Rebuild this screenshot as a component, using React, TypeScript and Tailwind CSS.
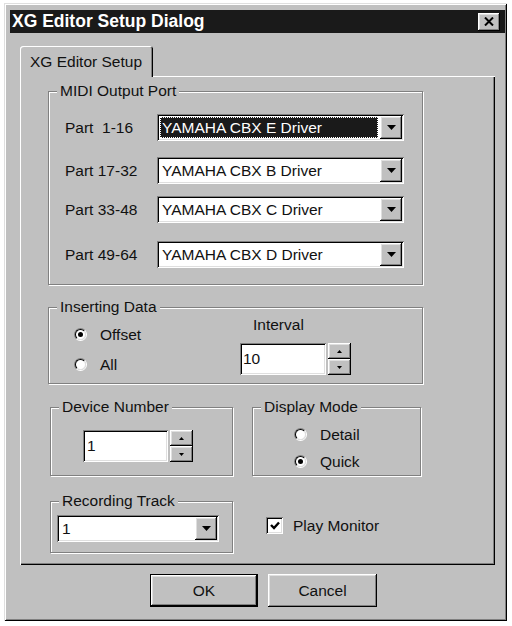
import React from 'react';

// win95-ish bevels
const raised =
  'shadow-[inset_-1px_-1px_0_#000,inset_1px_1px_0_#fff,inset_-2px_-2px_0_#808080,inset_2px_2px_0_#dfdfdf]';
const sunken =
  'shadow-[inset_1px_1px_0_#808080,inset_-1px_-1px_0_#fff,inset_2px_2px_0_#000,inset_-2px_-2px_0_#dfdfdf]';

function Group({ label, className, children }: { label: string; className: string; children?: React.ReactNode }) {
  return (
    <fieldset
      className={`border border-[#808080] shadow-[1px_1px_0_#fff,inset_1px_1px_0_#fff] ${className}`}
    >
      <legend className="ml-[8px] bg-[#c0c0c0] px-[3px] leading-[18px]">{label}</legend>
      {children}
    </fieldset>
  );
}

function Combo({ value, selected, className }: { value: string; selected?: boolean; className: string }) {
  return (
    <div className={`flex h-[27px] bg-white p-[2px] ${sunken} ${className}`}>
      <div className="flex flex-1 items-center py-[1px] pl-[1px] pr-[2px]">
        {selected ? (
          <span className="flex h-full w-full items-center border border-dotted border-white bg-[#1a1a1a] pl-[1px] text-white">
            {value}
          </span>
        ) : (
          <span className="pl-[2px]">{value}</span>
        )}
      </div>
      <div className={`flex h-full w-[22px] items-center justify-center bg-[#c0c0c0] ${raised}`}>
        <svg width="9" height="5" viewBox="0 0 9 5">
          <path d="M0 0h9L4.5 5z" fill="#000" />
        </svg>
      </div>
    </div>
  );
}

function Spin() {
  return (
    <div className="ml-[2px] flex h-[32px] w-[23px] flex-col">
      <div className={`flex flex-1 items-center justify-center bg-[#c0c0c0] ${raised}`}>
        <svg width="5" height="3" viewBox="0 0 5 3">
          <path d="M2.5 0L5 3H0z" fill="#000" />
        </svg>
      </div>
      <div className={`flex flex-1 items-center justify-center bg-[#c0c0c0] ${raised}`}>
        <svg width="5" height="3" viewBox="0 0 5 3">
          <path d="M0 0h5L2.5 3z" fill="#000" />
        </svg>
      </div>
    </div>
  );
}

function TextBox({ value, className }: { value: string; className: string }) {
  return (
    <div className={`flex h-[32px] items-center bg-white pl-[3px] ${sunken} ${className}`}>{value}</div>
  );
}

function Radio({ label, checked, className = '' }: { label: string; checked?: boolean; className?: string }) {
  return (
    <div className={`flex h-[13px] items-center ${className}`}>
      <span className="flex h-[13px] w-[13px] items-center justify-center rounded-full border border-b-white border-l-[#808080] border-r-white border-t-[#808080]">
        <span className="flex h-[11px] w-[11px] items-center justify-center rounded-full border border-b-[#dfdfdf] border-l-black border-r-[#dfdfdf] border-t-black bg-white">
          {checked && <span className="h-[5px] w-[5px] rounded-full bg-black" />}
        </span>
      </span>
      <span className="ml-[13px]">{label}</span>
    </div>
  );
}

export default function App() {
  const ports = [
    { label: 'Part  1-16', value: 'YAMAHA CBX E Driver', mt: 'mt-[14px]', selected: true },
    { label: 'Part 17-32', value: 'YAMAHA CBX B Driver', mt: 'mt-[16px]' },
    { label: 'Part 33-48', value: 'YAMAHA CBX C Driver', mt: 'mt-[12px]' },
    { label: 'Part 49-64', value: 'YAMAHA CBX D Driver', mt: 'mt-[18px]' },
  ];

  return (
    <div className="min-h-screen bg-white pl-[4px] pt-[3px] font-['Liberation_Sans',Arial,sans-serif] text-[15.5px] text-[#111]">
      <div className="flex h-[618px] w-[503px] flex-col bg-[#c0c0c0] shadow-[inset_1px_1px_0_#dfdfdf,inset_-1px_-1px_0_#000,inset_2px_2px_0_#fff,inset_-2px_-2px_0_#808080]">
        {/* Title bar */}
        <div className="ml-[6px] mt-[7px] flex h-[23px] w-[495px] items-center justify-between bg-[#1a1a1a] pl-[2px] pr-[5px]">
          <span className="text-[17.5px] font-bold leading-none text-white">XG Editor Setup Dialog</span>
          <div className={`flex h-[18px] w-[22px] items-center justify-center bg-[#c0c0c0] ${raised}`}>
            <svg width="10" height="9" viewBox="0 0 10 9">
              <path d="M1 0.5L9 8.5M9 0.5L1 8.5" stroke="#000" strokeWidth="2" />
            </svg>
          </div>
        </div>

        <div className="ml-[16px] mt-[13px] flex flex-col">
          {/* Tab */}
          <div className="relative z-10 -mb-px flex h-[31px] w-[133px] items-center rounded-t-[3px] bg-[#c0c0c0] pl-[10px] shadow-[inset_1px_1px_0_#fff,inset_-1px_0_0_#000,inset_-2px_0_0_#808080]">
            XG Editor Setup
          </div>

          {/* Tab panel */}
          <div className="flex h-[489px] w-[475px] flex-col pl-[28px] shadow-[inset_1px_1px_0_#fff,inset_-1px_-1px_0_#000,inset_-2px_-2px_0_#808080]">
            <Group label="MIDI Output Port" className="mt-[6px] h-[203px] w-[375px]">
              <div className="flex flex-col pl-[16px]">
                {ports.map((p) => (
                  <div key={p.label} className={`flex h-[27px] items-center ${p.mt}`}>
                    <span className="w-[92px] whitespace-pre">{p.label}</span>
                    <Combo value={p.value} selected={p.selected} className="w-[247px]" />
                  </div>
                ))}
              </div>
            </Group>

            <Group label="Inserting Data" className="mt-[13px] h-[86px] w-[375px]">
              <div className="flex">
                <div className="flex w-[191px] flex-col pl-[25px] pt-[12px]">
                  <Radio label="Offset" checked />
                  <Radio label="All" className="mt-[17px]" />
                </div>
                <div className="flex flex-col">
                  <span className="ml-[13px] leading-[18px]">Interval</span>
                  <div className="mt-[9px] flex">
                    <TextBox value="10" className="w-[86px]" />
                    <Spin />
                  </div>
                </div>
              </div>
            </Group>

            <div className="ml-[2px] mt-[14px] flex">
              <Group label="Device Number" className="h-[78px] w-[183px]">
                <div className="flex pl-[32px] pt-[14px]">
                  <TextBox value="1" className="w-[85px] pl-[4px]" />
                  <Spin />
                </div>
              </Group>
              <Group label="Display Mode" className="ml-[19px] h-[78px] w-[169px]">
                <div className="flex flex-col pl-[41px] pt-[12px]">
                  <Radio label="Detail" />
                  <Radio label="Quick" checked className="mt-[14px]" />
                </div>
              </Group>
            </div>

            <div className="ml-[2px] mt-[16px] flex">
              <Group label="Recording Track" className="h-[61px] w-[183px]">
                <div className="pl-[6px] pt-[5px]">
                  <Combo value="1" className="w-[162px]" />
                </div>
              </Group>
              <label className="ml-[33px] mt-[25px] flex h-[17px] items-center">
                <span className={`flex h-[17px] w-[17px] items-center justify-center bg-white ${sunken}`}>
                  <svg width="10" height="9" viewBox="0 0 10 9">
                    <path d="M1 4L4 7L9 1.5" stroke="#000" strokeWidth="2.4" fill="none" />
                  </svg>
                </span>
                <span className="ml-[10px]">Play Monitor</span>
              </label>
            </div>
          </div>

          {/* Buttons */}
          <div className="ml-[130px] mt-[9px] flex">
            <button className="h-[33px] w-[108px] border border-black p-0">
              <span className={`flex h-full w-full items-center justify-center bg-[#c0c0c0] ${raised}`}>OK</span>
            </button>
            <button
              className={`ml-[10px] flex h-[33px] w-[109px] items-center justify-center bg-[#c0c0c0] ${raised}`}
            >
              Cancel
            </button>
          </div>
        </div>
      </div>
    </div>
  );
}
